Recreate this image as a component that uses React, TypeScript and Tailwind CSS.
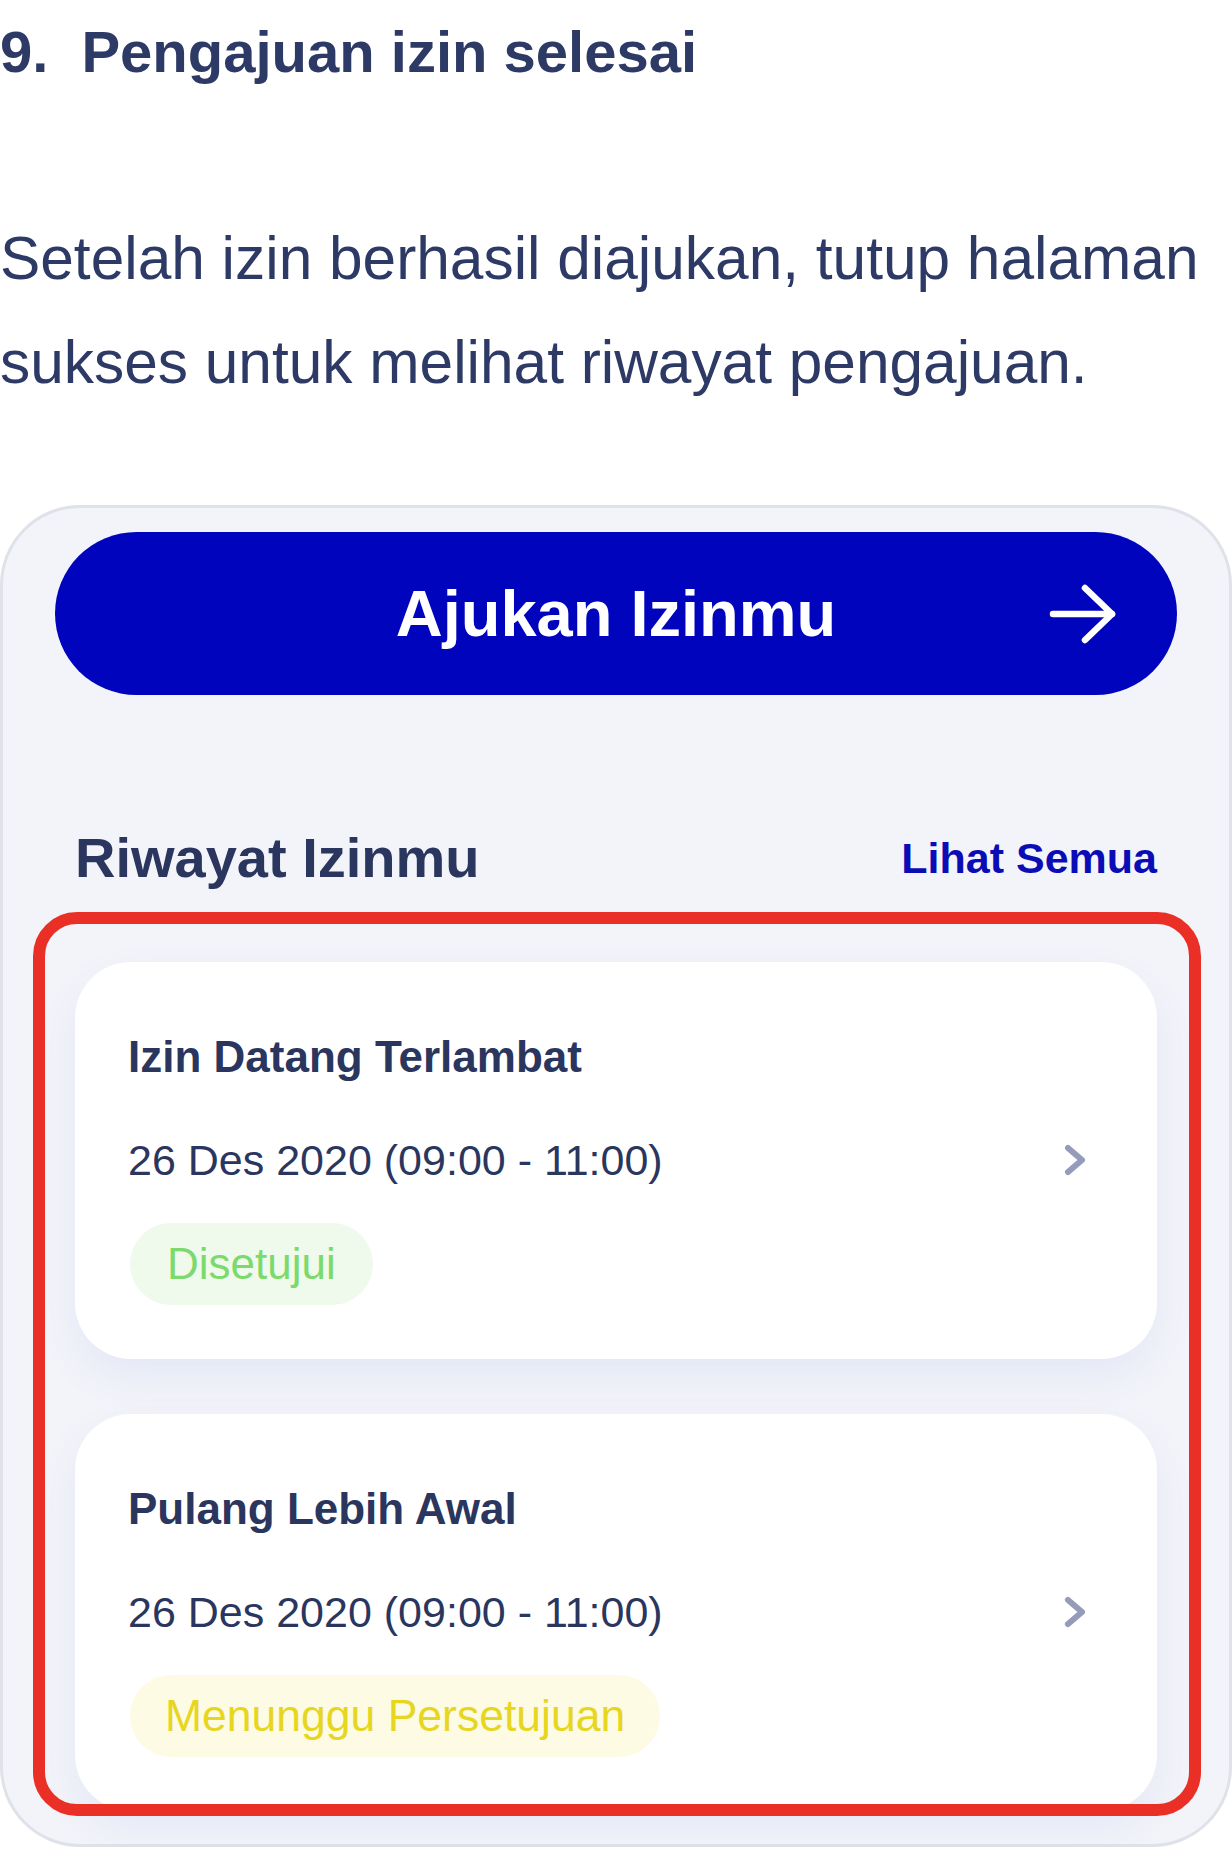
import React from 'react';

const font = { fontFamily: '"Liberation Sans", Arial, sans-serif' };

interface Leave {
  title: string;
  date: string;
  status: 'approved' | 'pending';
}

const items: Leave[] = [
  { title: 'Izin Datang Terlambat', date: '26 Des 2020 (09:00 - 11:00)', status: 'approved' },
  { title: 'Pulang Lebih Awal', date: '26 Des 2020 (09:00 - 11:00)', status: 'pending' },
];

function ArrowIcon() {
  return (
    <svg width="68" height="60" viewBox="0 0 68 60" fill="none" stroke="currentColor" strokeWidth="6.5" strokeLinecap="round" strokeLinejoin="round">
      <path d="M4 30H63" />
      <path d="M36 4L63 30L36 56" />
    </svg>
  );
}

function Chevron() {
  return (
    <svg width="24" height="32" viewBox="0 0 24 32" fill="none" stroke="#959cba" strokeWidth="6" strokeLinecap="round" strokeLinejoin="round">
      <path d="M5 4L19 16L5 28" />
    </svg>
  );
}

function StatusBadge({ status }: { status: Leave['status'] }) {
  if (status === 'approved') {
    return (
      <span className="inline-flex h-[82px] items-center rounded-full bg-[#effaed] px-[37px] text-[44px] text-[#7cda6c]">
        Disetujui
      </span>
    );
  }
  return (
    <span className="inline-flex h-[82px] items-center rounded-full bg-[#fdfbe4] px-[35px] text-[44.5px] text-[#e7d61f]">
      Menunggu Persetujuan
    </span>
  );
}

function LeaveCard({ item }: { item: Leave }) {
  return (
    <div className="h-[397px] rounded-[56px] bg-white pl-[53px] pr-[70px] pt-[69px] shadow-[0_18px_40px_rgba(70,90,220,0.08)]">
      <h4 className="text-[44px] font-bold leading-[52px] text-[#2b365e]">{item.title}</h4>
      <div className="mt-[51px] flex items-center justify-between">
        <p className="text-[43px] leading-[52px] text-[#2b365e]">{item.date}</p>
        <Chevron />
      </div>
      <div className="mt-[37px] pl-[2px]">
        <StatusBadge status={item.status} />
      </div>
    </div>
  );
}

export default function App() {
  return (
    <div className="w-[1232px] bg-white text-[#2e3a66]" style={font}>
      {/* Step heading */}
      <h2 className="flex gap-[33px] pt-[12px] text-[58px] font-bold leading-[80px]">
        <span>9.</span>
        <span>Pengajuan izin selesai</span>
      </h2>

      <p className="mt-[114px] text-[60.4px] leading-[104px]">
        Setelah izin berhasil diajukan, tutup halaman sukses untuk melihat riwayat pengajuan.
      </p>

      {/* Phone screenshot */}
      <div className="mt-[91px] rounded-[80px] border-[3px] border-[#e0e2ea] bg-[#f3f4f9] px-[52px] pb-[33px] pt-[24px]">
        <button className="grid h-[163px] w-full grid-cols-[1fr_auto_1fr] items-center rounded-full bg-[#0004bd] text-white">
          <span />
          <span className="text-[65px] font-bold">Ajukan Izinmu</span>
          <span className="mr-[60px] justify-self-end">
            <ArrowIcon />
          </span>
        </button>

        <div className="mx-[20px] mt-[131px] flex h-[64px] items-center justify-between">
          <h3 className="text-[56px] font-bold text-[#2b365e]">Riwayat Izinmu</h3>
          <a className="text-[43px] font-bold text-[#0a0db5]">Lihat Semua</a>
        </div>

        <div className="relative mx-[20px] mt-[72px] flex flex-col gap-[55px]">
          {items.map((item) => (
            <LeaveCard key={item.title} item={item} />
          ))}
          {/* highlight annotation */}
          <div className="pointer-events-none absolute -bottom-[5px] -left-[42px] -right-[44px] -top-[50px] rounded-[44px] border-[12px] border-[#ea2f27]" />
        </div>
      </div>
    </div>
  );
}
